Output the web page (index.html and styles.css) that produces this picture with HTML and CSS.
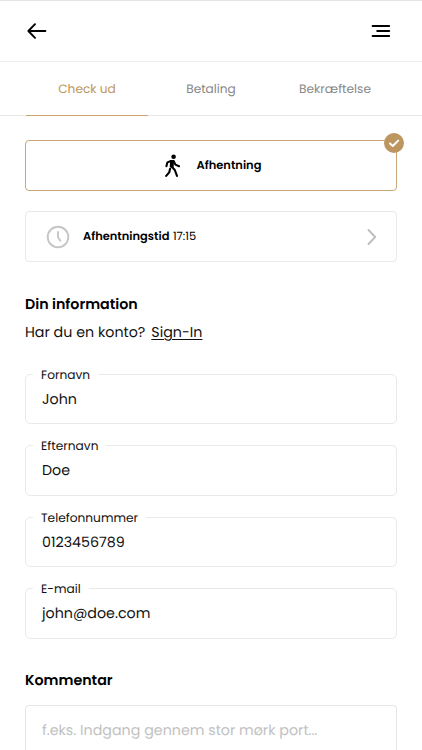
FILE: index.html
```
<!DOCTYPE html>
<html lang="da">
<head>
<meta charset="utf-8">
<meta name="viewport" content="width=device-width, initial-scale=1">
<title>Check ud</title>
<link rel="stylesheet" href="styles.css">
</head>
<body>
<header class="topbar">
  <svg class="back" viewBox="0 0 20 16" width="20" height="16"><path d="M8 1.2 1.4 8 8 14.8M1.6 8H18.4"/></svg>
  <svg class="menu" viewBox="0 0 20 14" width="20" height="14"><path d="M1.6 2H18.2M6.2 7H18.2M1.6 12H18.2"/></svg>
</header>
<nav class="tabs">
  <span class="tab active">Check ud</span>
  <span class="tab">Betaling</span>
  <span class="tab">Bekræftelse</span>
</nav>
<main>
  <section class="option selected">
    <svg class="walk" viewBox="0 0 16 24" width="16" height="24">
      <circle cx="8.6" cy="2.7" r="2.3"/>
      <path class="torso" d="M5.9 6.8 8.4 6.8 7.9 13.2 5.4 12.8Z"/>
      <path class="limb" d="M5.9 7 2.4 8.4 1.4 12.2M8.8 7.2 10.4 10.6 14 12.2M6.8 12.8 9.8 16 12 21.9M5.1 14.8 4.2 18.4 1.2 21.9"/>
    </svg>
    <strong>Afhentning</strong>
    <span class="check"><svg viewBox="0 0 20 20" width="20" height="20"><path d="M6 10.4 8.8 13 14.2 7.6"/></svg></span>
  </section>
  <section class="option time">
    <svg class="clock" viewBox="0 0 24 24" width="24" height="24"><circle cx="12" cy="12" r="10.3"/><path d="M12 7V12.2L14.3 15.7"/></svg>
    <strong>Afhentningstid</strong><span class="hour">17:15</span>
    <svg class="chevron" viewBox="0 0 10 18" width="10" height="18"><path d="M1.5 2 8.2 9 1.5 16"/></svg>
  </section>
  <h2 class="info-title">Din information</h2>
  <p class="account">Har du en konto?<a class="signin">Sign-In</a></p>
  <form class="fields">
    <fieldset class="field"><legend>Fornavn</legend><div>John</div></fieldset>
    <fieldset class="field"><legend>Efternavn</legend><div>Doe</div></fieldset>
    <fieldset class="field"><legend>Telefonnummer</legend><div>0123456789</div></fieldset>
    <fieldset class="field"><legend>E-mail</legend><div>john@doe.com</div></fieldset>
  </form>
  <h2 class="comment-title">Kommentar</h2>
  <div class="comment">f.eks. Indgang gennem stor mørk port...</div>
</main>
</body>
</html>
```
FILE: styles.css
```
* { box-sizing: border-box; }
html, body { height: 750px; overflow: hidden; }
body {
  margin: 0;
  background: #fff;
  color: #111;
  font-family: Poppins, Inter, "Liberation Sans", sans-serif;
  font-size: 14.25px;
  text-rendering: geometricPrecision;
}
svg { fill: none; stroke-linecap: round; stroke-linejoin: round; flex: none; }
.topbar {
  height: 62px;
  padding: 0 31px 0 27px;
  display: flex;
  align-items: center;
  justify-content: space-between;
  border-top: 1px solid #e4e4e4;
  border-bottom: 1px solid #ececec;
}
.back { stroke: #000; stroke-width: 1.9; }
.menu { stroke: #000; stroke-width: 1.9; }
.tabs {
  height: 54px;
  padding: 0 25px;
  display: grid;
  grid-template-columns: repeat(3, 1fr);
  border-bottom: 1px solid #e9e9e9;
}
.tab {
  height: 54px;
  padding-top: 1px;
  line-height: 53px;
  text-align: center;
  font-size: 12.15px;
  color: #888;
}
.tab.active { margin: 0 1px; color: #bd965a; border-bottom: 1px solid #cda46c; }
main { padding: 24px 25px 0; }
.option {
  position: relative;
  height: 51px;
  display: flex;
  align-items: center;
  border: 1px solid #e9e9e9;
  border-radius: 4px;
  font-size: 11.45px;
  color: #000;
}
.option strong { font-weight: 600; }
.option strong, .hour { padding-top: 2px; }
.option.selected { justify-content: center; border-color: #c8a675; gap: 16px; padding-left: 4px; }
.walk { fill: #000; }
.limb { fill: none; stroke: #000; stroke-width: 2.1; }
.torso { stroke: #000; stroke-width: 1.4; }
.check {
  position: absolute;
  top: -8px;
  right: -8px;
  width: 20px;
  height: 20px;
  border-radius: 50%;
  background: #bd965f;
}
.check svg { display: block; stroke: #fff; stroke-width: 2; }
.time { margin-top: 20px; padding: 0 19px 0 20px; }
.time strong { margin-left: 13px; }
.clock { stroke: #c6c6c6; stroke-width: 1.9; }
.hour { margin-left: 3.5px; }
.chevron { margin-left: auto; stroke: #bebebe; stroke-width: 1.9; }
h2 { margin: 0; font-size: 14.25px; font-weight: 600; line-height: 22px; color: #000; }
.info-title { margin-top: 31px; }
.account { margin: 6px 0 0; line-height: 22px; }
.signin { margin-left: 6px; text-decoration: underline; text-underline-offset: 2px; text-decoration-thickness: 1px; }
.fields { margin-top: 24px; display: grid; gap: 20.5px; }
.field {
  height: 57px;
  margin: 0 0 -6px;
  padding: 0 16px;
  min-width: 0;
  border: 1px solid #e9e9e9;
  border-radius: 5px;
}
legend {
  position: relative;
  top: 1.6px;
  margin-left: -9px;
  padding: 0 8px;
  font-size: 12.2px;
  line-height: 14px;
}
.field div { line-height: 22px; margin-top: 6.5px; }
.comment-title { margin-top: 36px; }
.comment {
  height: 45px;
  margin-top: 14.5px;
  padding: 13px 16px 0;
  border: 1px solid #e6e6e6;
  border-bottom: 0;
  border-radius: 4px 4px 0 0;
  line-height: 22px;
  color: #c1c1c1;
}
```
